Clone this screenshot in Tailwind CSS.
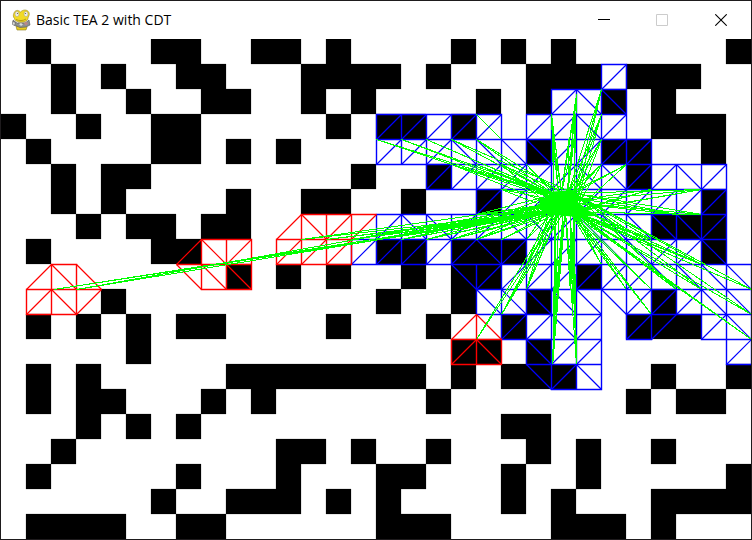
<!DOCTYPE html>
<html lang="en">
<head>
<meta charset="utf-8">
<title>Basic TEA 2 with CDT</title>
<script src="https://cdn.jsdelivr.net/npm/@tailwindcss/browser@4"></script>
</head>
<body class="bg-white">
<div class="flex min-h-screen flex-col border border-[#1e1b1d] bg-white font-['Open_Sans','Noto_Sans',sans-serif] text-black">
  <header class="flex h-[38px] items-center pl-2.5">
    <svg class="mr-1 h-[22px] w-[21px] shrink-0" viewBox="0 0 21 22" aria-hidden="true">
      <path d="M5 17l2-3h7l2 4-1 3H6z" fill="#e8cc20" stroke="#8a7a18" stroke-width=".6"/>
      <path d="M2 11l4 3 8 0 4-3 1 5-4 2-6 .5-6-2.500z" fill="#8d9190" stroke="#555" stroke-width=".6"/>
      <path d="M1.500 12.500l3 1-1 3-2-1z" fill="#ddd" stroke="#444" stroke-width=".5"/>
      <path d="M8 15l2-1 2 1.500-2 1.500z" fill="#d8dada"/>
      <path d="M15 12.500l2 2-2 2-2-2z" fill="#b88"/>
      <path d="M3 4C4 1 7 .5 9.500 3 12 .5 16 0 18 3.500c1 3-1 4-1 6-1 3-4 3.500-7 3.500S3.500 12 3.500 9.500C2 8 2 6 3 4z" fill="#f2da25" stroke="#9a861b" stroke-width=".6"/>
      <ellipse cx="6" cy="5" rx="2" ry="2.600" fill="#ececec" stroke="#a8a27a" stroke-width=".5"/>
      <ellipse cx="15" cy="5" rx="2" ry="2.600" fill="#ececec" stroke="#a8a27a" stroke-width=".5"/>
      <circle cx="6.500" cy="4.500" r=".6" fill="#555"/><circle cx="14.500" cy="4.500" r=".6" fill="#555"/>
      <path d="M5 10.500c3 1.500 7 1.500 10-.5" fill="none" stroke="#a38b13" stroke-width=".8"/>
    </svg>
    <h1 class="grow text-sm leading-5">Basic TEA 2 with CDT</h1>
    <div class="flex h-full">
      <button type="button" aria-label="Minimize" class="flex w-[58px] items-center justify-center"><svg class="size-3" viewBox="0 0 12 12"><path d="M0 5.500H12" stroke="#000"/></svg></button>
      <button type="button" aria-label="Maximize" disabled class="flex w-[58px] items-center justify-center"><svg class="size-3" viewBox="0 0 12 12"><path d="M.5.5H11.500V11.500H.5z" fill="none" stroke="#ccc"/></svg></button>
      <button type="button" aria-label="Close" class="flex w-[60px] items-center justify-center"><svg class="size-3" viewBox="0 0 12 12"><path d="M.3.300L11.700 11.700M11.700.300L.3 11.700" stroke="#000" stroke-width="1.100"/></svg></button>
    </div>
  </header>
  <main>
    <svg id="map" class="block w-full" viewBox="0 0 30 20" role="img" aria-label="Grid map with triangulated cells and lines of sight">
      <path id="walls" fill="#000" stroke="#000" stroke-width=".008"/>
      <g transform="translate(.02 .02)" fill="none">
        <path id="nearDiagonal" stroke="#00f" stroke-width=".046"/>
        <path id="near" stroke="#00f" stroke-width=".056"/>
        <path id="farDiagonal" stroke="#f00" stroke-width=".046"/>
        <path id="far" stroke="#f00" stroke-width=".056"/>
        <path id="rays" stroke="#0f0" stroke-width=".04" shape-rendering="crispEdges"/>
        <path d="M22.050 6.080L23 6.020 23.050 6.500 23.500 6.850 23.900 7.050 23 7.100 22 7 21.600 6.850 21.500 6.500z" fill="#0f0"/>
      </g>
    </svg>
  </main>
</div>
<script>
// Walls: one list of occupied columns per row of the 30 x 20 grid.
const walls = [
  [1,6,7,10,11,13,18,20,22,29], [2,4,7,8,12,13,14,15,17,21,22,23,25,26,27],
  [2,5,8,9,12,14,19,21,24,26], [0,3,6,7,13,15,16,18,26,27,28],
  [1,6,7,9,11,21,24,25,28], [2,4,5,14,17,25],
  [2,4,9,12,13,16,19,28], [3,5,6,8,9,26,27,28],
  [1,6,7,15,16,18,19,20,28], [9,11,13,16,18,19,23],
  [4,15,18,21,26], [1,3,5,7,8,13,17,20,25,26,27],
  [5,18,19,21], [1,3,9,10,11,12,13,14,15,16,18,20,21,22,26,29],
  [1,3,4,8,10,17,25,27,28], [3,5,7,20,21],
  [2,11,12,14,17,21,23,26], [1,7,11,15,16,20,23,29],
  [6,9,10,11,13,15,20,22,26,27,28,29], [1,2,3,4,7,8,15,16,17,22,23,24,26]
];
document.getElementById('walls').setAttribute('d',
  walls.map((row, y) => row.map(x => `M${x} ${y}h1v1h-1z`).join('')).join(''));

// Mesh cells. / and b are split cells; q, j, p, l are the upper-left,
// lower-right, upper-right and lower-left triangles alone.
const edges = {
  '/': ['h1v1h-1z', '/'], b: ['h1v1h-1z', 'b'],
  q: ['m0 1v-1h1', '/'], j: ['m1 0v1h-1', '/'],
  p: ['h1v1', 'b'], l: ['v1h1', 'b']
};
function mesh(id, rows) {
  let sides = '', diagonals = '';
  for (const [y, x0, cells] of rows) {
    [...cells].forEach((kind, i) => {
      if (kind === '.') return;
      const x = x0 + i, [side, slope] = edges[kind];
      sides += `M${x} ${y}${side}`;
      diagonals += slope === '/' ? `M${x} ${y + 1}l1-1` : `M${x} ${y}l1 1`;
    });
  }
  document.getElementById(id).setAttribute('d', sides);
  document.getElementById(id + 'Diagonal').setAttribute('d', diagonals);
}
mesh('near', [
  [1,24,'/'], [2,22,'/bb'], [3,15,'/////.//b/'], [4,15,'///bbbb////'],
  [5,17,'//////bb//b/'], [6,19,'//////////'], [7,15,'/bb//bb/bbbbb/'],
  [8,14,'////qp////bb//b'], [9,18,'pq//////bbbb'], [10,19,'bbbbbp///bb'],
  [11,20,'//b/./q./b'], [12,21,'b//'], [12,29,'/'], [13,21,'p/b']
]);
mesh('far', [
  [7,11,'jb/q'], [8,11,'///'], [8,7,'jb/'], [9,7,'pbb'],
  [9,1,'jbl'], [10,1,'/bq'], [11,18,'jl'], [12,18,'/b']
]);

// Rays: target x, target y, then the points they are seen from.
const a = [22.1, 6.2], b = [22.9, 6.15], c = [22.15, 6.85], d = [22.9, 6.9], e = [22.5, 6.5];
const f = [22, 6.6], g = [22.3, 6.9], h = [22.55, 6.8], k = [22.75, 6.9];
const m = [22.4, 6.1], n = [22.65, 6.2], o = [22.3, 6.3];
const rays = [
  [15,4,a,e], [16,4,a,e], [17,4,a,o], [18,4,a,b], [19,4,a,m], [19,3,[20,4]],
  [18,5,a,f,o], [19,5,a,e,o], [20,5,a,c,m], [21,5,a,e], [20,6,a,c,e],
  [2.1,10,c,g], [3,10,c,f], [12,8,c,f], [13,8,g,c], [14,8,f,c,g], [15,8,f,c,g],
  [16,8,f,c,h], [17,8,c,f,h], [18,8,c,f,g], [19,8,f,c,g], [20,8,c,h], [21,8,f,c,e],
  [19,7,f,c,e,a], [20,7,f,c,e,a],
  [19,12,c,[21,9]], [20,11,c,g,h], [21,10,f,c,e,g], [21,9,c,e,f],
  [22.05,13,c,g,h,e], [22.1,12,c,g,h], [22.15,11,c,h,g], [22.2,10,c,h,e],
  [23,13,d,k,h], [22.95,11,d,k,h], [22.85,11,d,k], [22.75,10,d,k,h],
  [24,9,k,e,d], [26,11,k,d], [26,10,d,k], [25,10,k,d], [27,10,b,e,d],
  [28,9,b,d,e,k], [30,10,b,k], [30,11,b,d], [30,12,k,d], [26,8,b,d,e,k], [28,10,b,d],
  [28,6,d,e,k,b], [28,7,b,d,e,k], [26,6,d,e,k], [27,7,b,e,a],
  [23,2.2,m,n,b], [22.9,3,m,n,b], [24,2,d,n,b], [24,3,d,n,b], [24,4,d,n,b],
  [22,3,a,o,m], [22.05,4,a,o,m], [22.9,4,m,n,b], [25,5,d,n,b], [24,5,d,n,b], [22.7,4,m,n]
];
document.getElementById('rays').setAttribute('d',
  rays.map(([x, y, ...from]) => from.map(p => `M${p[0]} ${p[1]}L${x} ${y}`).join('')).join(''));
</script>
</body>
</html>
